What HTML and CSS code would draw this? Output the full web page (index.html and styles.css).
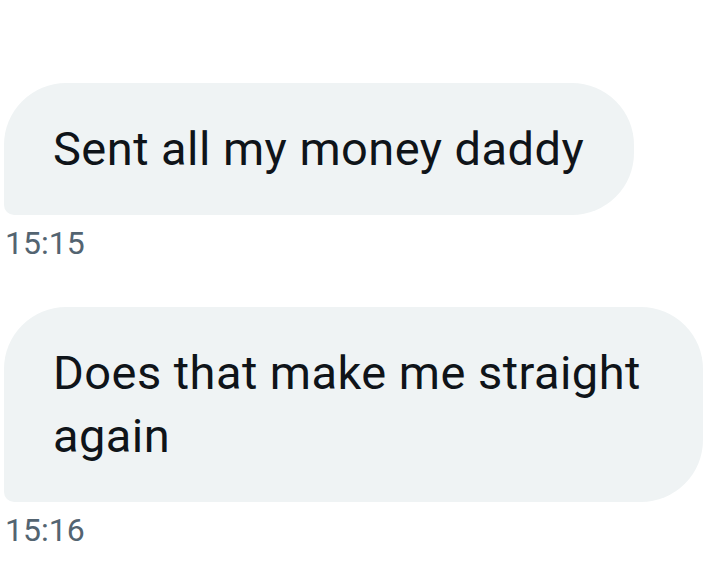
FILE: index.html
```html
<!DOCTYPE html>
<html lang="en">
<head>
<meta charset="utf-8">
<title>Messages</title>
<link rel="stylesheet" href="styles.css">
</head>
<body>
  <main class="thread">
    <div class="message">
      <div class="bubble">Sent all my money daddy</div>
      <time class="stamp">15:15</time>
    </div>
    <div class="message">
      <div class="bubble">Does that make me straight again</div>
      <time class="stamp">15:16</time>
    </div>
  </main>
</body>
</html>
```

FILE: styles.css
```css
* {
  box-sizing: border-box;
}

html,
body {
  margin: 0;
  background: #ffffff;
}

body {
  font-family: Roboto, "Liberation Sans", sans-serif;
  color: #0f1419;
  width: 713px;
  height: 585px;
  overflow: hidden;
}

.thread {
  display: flex;
  flex-direction: column;
  align-items: flex-start;
  gap: 44px;
  padding: 83px 0 0 4px;
}

.message {
  display: flex;
  flex-direction: column;
  align-items: flex-start;
}

.bubble {
  width: fit-content;
  max-width: 699px;
  padding: 34px 50px 35px 49px;
  background: #eff3f4;
  border-radius: 62px 62px 62px 10px;
  font-size: 47px;
  letter-spacing: 0.45px;
  line-height: 63px;
}

.stamp {
  display: block;
  margin-top: 8px;
  padding-left: 1px;
  font-size: 32px;
  line-height: 40px;
  color: #536471;
}
```
